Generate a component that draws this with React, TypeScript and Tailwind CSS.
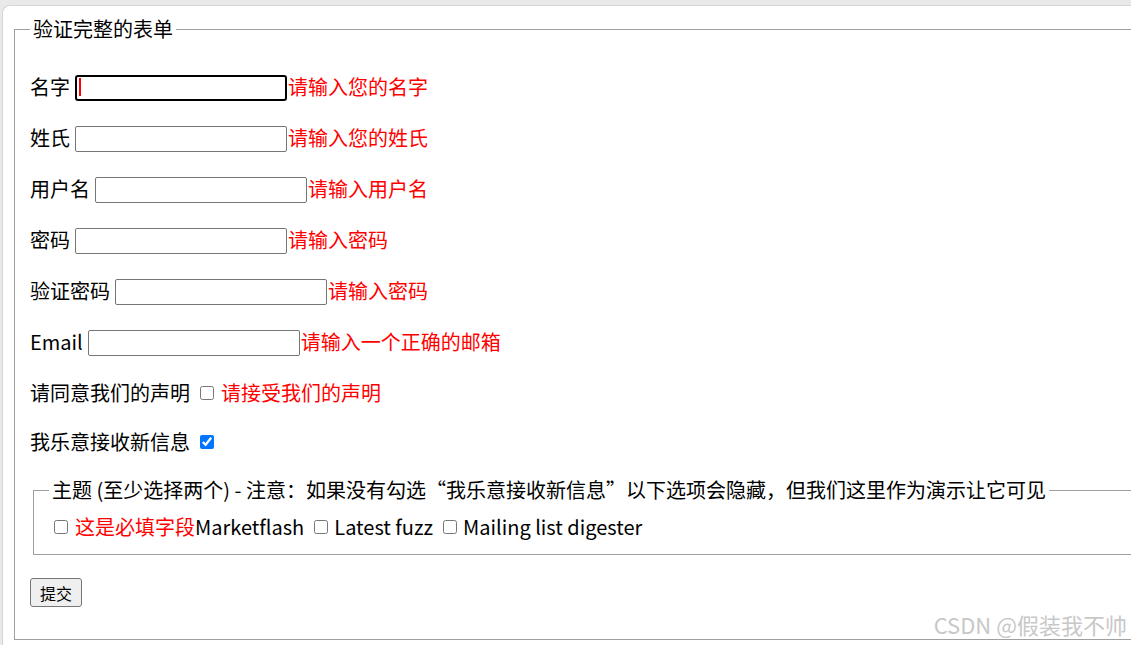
import React from "react";

const font = { fontFamily: '"Noto Sans CJK SC", "Noto Sans", sans-serif' };

function TextRow({
  label,
  error,
  focused = false,
}: {
  label: string;
  error: string;
  focused?: boolean;
}) {
  return (
    <div className="flex h-[31px] items-center">
      <span className="whitespace-nowrap">{label}</span>
      <div className="relative ml-[5px] h-[26px] w-[212px] shrink-0">
        {focused ? (
          <>
            <input
              type="text"
              className="h-full w-full rounded-[3px] border-2 border-black bg-white outline-none"
            />
            <span className="pointer-events-none absolute left-[4px] top-[4px] h-[18px] w-[2px] bg-[#ff0000]" />
          </>
        ) : (
          <input
            type="text"
            className="h-full w-full rounded-[2px] border border-[#767676] bg-white outline-none"
          />
        )}
      </div>
      <span className="ml-[1px] whitespace-nowrap text-[#ff0000]">{error}</span>
    </div>
  );
}

function Box({ checked = false, className = "" }: { checked?: boolean; className?: string }) {
  return (
    <input
      type="checkbox"
      defaultChecked={checked}
      className={`m-0 h-[14px] w-[14px] shrink-0 accent-[#0075ff] ${className}`}
    />
  );
}

export default function App() {
  return (
    <div
      className="relative h-[645px] w-[1131px] overflow-hidden bg-[#e9e9e9] pl-[2px] pt-[5px] text-[20px] text-black"
      style={font}
    >
      <div className="h-[700px] w-[1200px] rounded-tl-[8px] border-l border-t border-[#d6d6d6] bg-white pl-[11px] pt-[9px]">
        <fieldset className="m-0 w-[1300px] border border-[#a0a0a0] px-[15px] pb-[12px] pt-0">
          <legend className="px-[3px] leading-[28px]">验证完整的表单</legend>
          <div className="flex flex-col pt-[28px]">
            <div className="flex flex-col gap-[20px]">
              <TextRow label="名字" error="请输入您的名字" focused />
              <TextRow label="姓氏" error="请输入您的姓氏" />
              <TextRow label="用户名" error="请输入用户名" />
              <TextRow label="密码" error="请输入密码" />
              <TextRow label="验证密码" error="请输入密码" />
              <TextRow label="Email" error="请输入一个正确的邮箱" />
              <div className="flex h-[31px] items-center">
                <span className="whitespace-nowrap">请同意我们的声明</span>
                <Box className="ml-[10px]" />
                <span className="ml-[7px] whitespace-nowrap text-[#ff0000]">请接受我们的声明</span>
              </div>
              <div className="flex h-[27px] items-center">
                <span className="whitespace-nowrap">我乐意接收新信息</span>
                <Box checked className="ml-[10px]" />
              </div>
            </div>

            <fieldset className="mx-[3px] mt-[21px] w-[1250px] border border-[#a0a0a0] px-[15px] pb-[13px] pt-[8px]">
              <legend className="whitespace-nowrap px-[3px] leading-[28px]">
                主题 (至少选择两个) - 注意：如果没有勾选“我乐意接收新信息”以下选项会隐藏，但我们这里作为演示让它可见
              </legend>
              <div className="flex h-[29px] items-center whitespace-nowrap">
                <Box className="ml-[5px]" />
                <span className="ml-[7px] text-[#ff0000]">这是必填字段</span>
                <span>Marketflash</span>
                <Box className="ml-[10px]" />
                <span className="ml-[6px]">Latest fuzz</span>
                <Box className="ml-[10px]" />
                <span className="ml-[6px]">Mailing list digester</span>
              </div>
            </fieldset>

            <div className="mb-[20px] mt-[23px]">
              <button
                type="button"
                className="flex h-[29px] w-[52px] items-center justify-center rounded-[3px] border border-[#767676] bg-[#efefef] text-[16px] leading-none text-black"
              >
                提交
              </button>
            </div>
          </div>
        </fieldset>
      </div>

      <div className="absolute bottom-[8px] right-[4px] whitespace-nowrap text-[22px] leading-[26px] text-[#c8c8c8]">
        CSDN @假装我不帅
      </div>
    </div>
  );
}
